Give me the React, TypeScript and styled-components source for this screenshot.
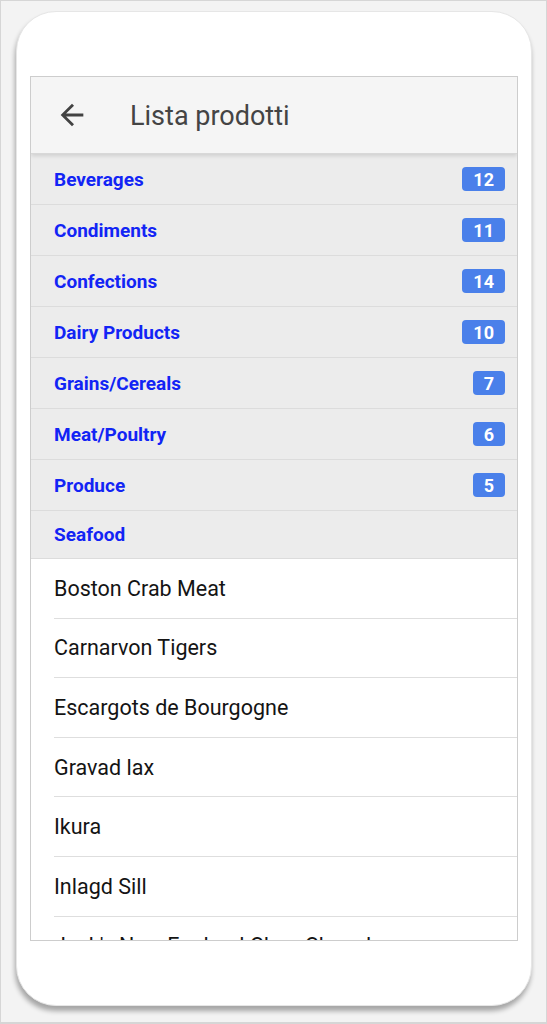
import React from "react";
import styled, { createGlobalStyle } from "styled-components";

const Global = createGlobalStyle`
  html, body { margin: 0; padding: 0; }
  body {
    background: #f2f2f2;
    font-family: Roboto, "Noto Sans", Arial, sans-serif;
    -webkit-font-smoothing: antialiased;
  }
`;

const Page = styled.div`
  box-sizing: border-box;
  width: 547px;
  height: 1024px;
  border: 1px solid #d6d6d6;
  border-bottom-width: 2px;
  background: #f3f3f3;
  padding: 10px 15px 0 15px;
`;

const Phone = styled.div`
  box-sizing: border-box;
  width: 516px;
  height: 995px;
  background: #ffffff;
  border-radius: 40px;
  border: 1px solid #e6e6e6;
  box-shadow: -1px 5px 5px rgba(0, 0, 0, 0.32);
  padding: 64px 13px 0 13px;
`;

const Screen = styled.div`
  box-sizing: border-box;
  height: 865px;
  border: 1px solid #cdcdcd;
  overflow: hidden;
  display: flex;
  flex-direction: column;
  background: #fff;
`;

const Header = styled.div`
  flex: none;
  height: 76px;
  display: flex;
  align-items: center;
  background: #f5f5f5;
  border-bottom: 1px solid #d8d8d8;
  box-shadow: 0 2px 4px rgba(0, 0, 0, 0.12);
  position: relative;
  z-index: 1;
`;

const BackButton = styled.div`
  width: 34px;
  height: 34px;
  margin-left: 24px;
  margin-right: 41px;
  display: flex;
  align-items: center;
  justify-content: center;
  color: #424242;
`;

const Title = styled.div`
  font-size: 27px;
  font-weight: 400;
  color: #444444;
  padding-top: 2px;
`;

const List = styled.div`
  flex: 1;
  overflow: hidden;
`;

const GroupRow = styled.div<{ $h: number }>`
  box-sizing: border-box;
  height: ${(p) => p.$h}px;
  display: flex;
  align-items: center;
  justify-content: space-between;
  padding: 0 11px 0 23px;
  background: #ececec;
  border-bottom: 1px solid #dcdcdc;
`;

const GroupName = styled.div`
  font-size: 19px;
  font-weight: 700;
  color: #1224f5;
`;

const Badge = styled.div`
  min-width: 31px;
  box-sizing: border-box;
  height: 24px;
  padding: 0 11px;
  margin-right: 1px;
  border-radius: 4px;
  background: #4a80ea;
  color: #ffffff;
  font-size: 18px;
  font-weight: 700;
  display: flex;
  align-items: center;
  justify-content: center;
`;

const Item = styled.div`
  box-sizing: border-box;
  height: 59.6px;
  margin-left: 23px;
  display: flex;
  align-items: center;
  border-bottom: 1px solid #dedede;
  font-size: 21.5px;
  color: #141414;
`;

const groups = [
  { name: "Beverages", count: 12 },
  { name: "Condiments", count: 11 },
  { name: "Confections", count: 14 },
  { name: "Dairy Products", count: 10 },
  { name: "Grains/Cereals", count: 7 },
  { name: "Meat/Poultry", count: 6 },
  { name: "Produce", count: 5 },
];

const items = [
  "Boston Crab Meat",
  "Carnarvon Tigers",
  "Escargots de Bourgogne",
  "Gravad lax",
  "Ikura",
  "Inlagd Sill",
  "Jack's New England Clam Chowder",
  "Nord-Ost Matjeshering",
];

export default function App() {
  return (
    <>
      <Global />
      <Page>
        <Phone>
          <Screen>
            <Header>
              <BackButton>
                <svg width="34" height="34" viewBox="0 0 24 24">
                  <path
                    d="M20 11H7.83l5.59-5.59L12 4l-8 8 8 8 1.41-1.41L7.83 13H20v-2z"
                    fill="currentColor"
                  />
                </svg>
              </BackButton>
              <Title>Lista prodotti</Title>
            </Header>
            <List>
              {groups.map((g) => (
                <GroupRow key={g.name} $h={51}>
                  <GroupName>{g.name}</GroupName>
                  <Badge>{g.count}</Badge>
                </GroupRow>
              ))}
              <GroupRow $h={48}>
                <GroupName>Seafood</GroupName>
              </GroupRow>
              {items.map((it) => (
                <Item key={it}>{it}</Item>
              ))}
            </List>
          </Screen>
        </Phone>
      </Page>
    </>
  );
}
